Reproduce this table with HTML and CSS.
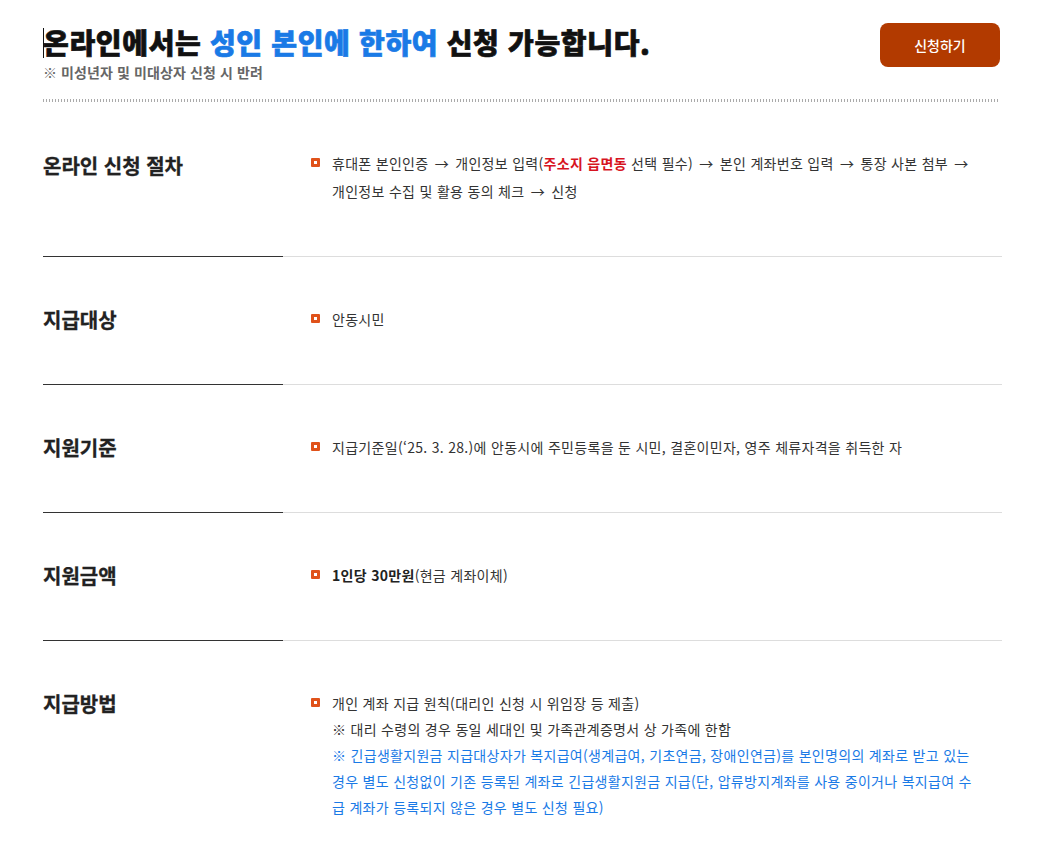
FILE: index.html
```html
<!DOCTYPE html>
<html lang="ko">
<head>
<meta charset="utf-8">
<link rel="stylesheet" href="styles.css">
</head>
<body>
<div class="wrap">
  <header class="head">
    <div class="head-text">
      <h1 class="title"><span class="caret"></span>온라인에서는 <em>성인 본인에 한하여</em> 신청 가능합니다.</h1>
      <p class="sub">※ 미성년자 및 미대상자 신청 시 반려</p>
    </div>
    <a class="btn" href="#">신청하기</a>
  </header>
  <div class="dots"></div>

  <section class="row row-first">
    <h2 class="row-title">온라인 신청 절차</h2>
    <div class="row-body">
      <p class="item item-tall">휴대폰 본인인증 <span class="arr">→</span> 개인정보 입력(<b class="red">주소지 읍면동</b> 선택 필수) <span class="arr">→</span> 본인 계좌번호 입력 <span class="arr">→</span> 통장 사본 첨부 <span class="arr">→</span> 개인정보 수집 및 활용 동의 체크 <span class="arr">→</span> 신청</p>
    </div>
  </section>

  <section class="row">
    <h2 class="row-title">지급대상</h2>
    <div class="row-body">
      <p class="item">안동시민</p>
    </div>
  </section>

  <section class="row">
    <h2 class="row-title">지원기준</h2>
    <div class="row-body">
      <p class="item">지급기준일(‘25. 3. 28.)에 안동시에 주민등록을 둔 시민, 결혼이민자, 영주 체류자격을 취득한 자</p>
    </div>
  </section>

  <section class="row">
    <h2 class="row-title">지원금액</h2>
    <div class="row-body">
      <p class="item"><b>1인당 30만원</b>(현금 계좌이체)</p>
    </div>
  </section>

  <section class="row row-last">
    <h2 class="row-title">지급방법</h2>
    <div class="row-body">
      <p class="item">개인 계좌 지급 원칙(대리인 신청 시 위임장 등 제출)</p>
      <p class="note">※ 대리 수령의 경우 동일 세대인 및 가족관계증명서 상 가족에 한함</p>
      <p class="note blue">※ 긴급생활지원금 지급대상자가 복지급여(생계급여, 기초연금, 장애인연금)를 본인명의의 계좌로 받고 있는 경우 별도 신청없이 기존 등록된 계좌로 긴급생활지원금 지급(단, 압류방지계좌를 사용 중이거나 복지급여 수급 계좌가 등록되지 않은 경우 별도 신청 필요)</p>
    </div>
  </section>
</div>
</body>
</html>
```

FILE: styles.css
```css
*, *::before, *::after { box-sizing: border-box; }
html, body { margin: 0; padding: 0; background: #fff; }
body {
  font-family: "Noto Sans CJK KR", "Noto Sans", sans-serif;
  color: #333;
}
.wrap {
  width: 959px;
  margin-left: 43px;
}
.head {
  display: flex;
  justify-content: space-between;
  align-items: flex-start;
  padding-top: 24px;
}
.title {
  margin: 0;
  font-size: 28px;
  line-height: 36px;
  font-weight: 900;
  color: #111;
  letter-spacing: 0.65px;
  -webkit-text-stroke: 0.7px currentColor;
  position: relative;
}
.caret {
  position: absolute;
  left: 0;
  top: 4px;
  width: 1px;
  height: 30px;
  background: #111;
}
.title em {
  font-style: normal;
  color: #1a7ae6;
}
.sub {
  margin: 2px 0 0;
  font-size: 14px;
  line-height: 20px;
  font-weight: 700;
  color: #666;
  letter-spacing: 0.1px;
}
.btn {
  display: flex;
  align-items: center;
  justify-content: center;
  width: 120px;
  height: 44px;
  margin-top: -1px;
  margin-right: 2px;
  background: #b23a00;
  border-radius: 8px;
  color: #fff;
  font-size: 14px;
  font-weight: 500;
  text-decoration: none;
}
.dots {
  margin-top: 17px;
  width: 957px;
  height: 3px;
  background: repeating-linear-gradient(90deg, #aaa 0 1px, transparent 1px 3px);
}
.row {
  display: grid;
  grid-template-columns: 240px 1fr;
}
.row-title {
  margin: 0;
  padding: 49px 0 50px;
  font-size: 20px;
  line-height: 28px;
  font-weight: 700;
  color: #222;
  letter-spacing: 0;
  -webkit-text-stroke: 0.3px currentColor;
  border-bottom: 1px solid #333;
}
.row-body {
  padding: 49px 27px 50px 28px;
  border-bottom: 1px solid #ddd;
  font-size: 14px;
  line-height: 26px;
  color: #333;
  letter-spacing: 0.3px;
}
.row-first .row-title { padding-top: 50px; padding-bottom: 48px; }
.row-first .row-body { padding-top: 47px; padding-bottom: 51px; }
.row-last .row-title,
.row-last .row-body { border-bottom: none; }
.item, .note {
  margin: 0;
  padding-left: 21px;
  position: relative;
}
.item-tall { line-height: 28px; }
.arr { margin: 0 2px; }
.item::before {
  content: "";
  position: absolute;
  left: 0;
  top: 8px;
  width: 9px;
  height: 9px;
  border: 3px solid #e0521a;
  border-radius: 1px;
  background: #fff;
}
.item-tall::before { top: 9px; }
.item b { font-weight: 700; color: #222; }
.item b.red { color: #d7141f; }
.blue { color: #1a7ae6; }
```
